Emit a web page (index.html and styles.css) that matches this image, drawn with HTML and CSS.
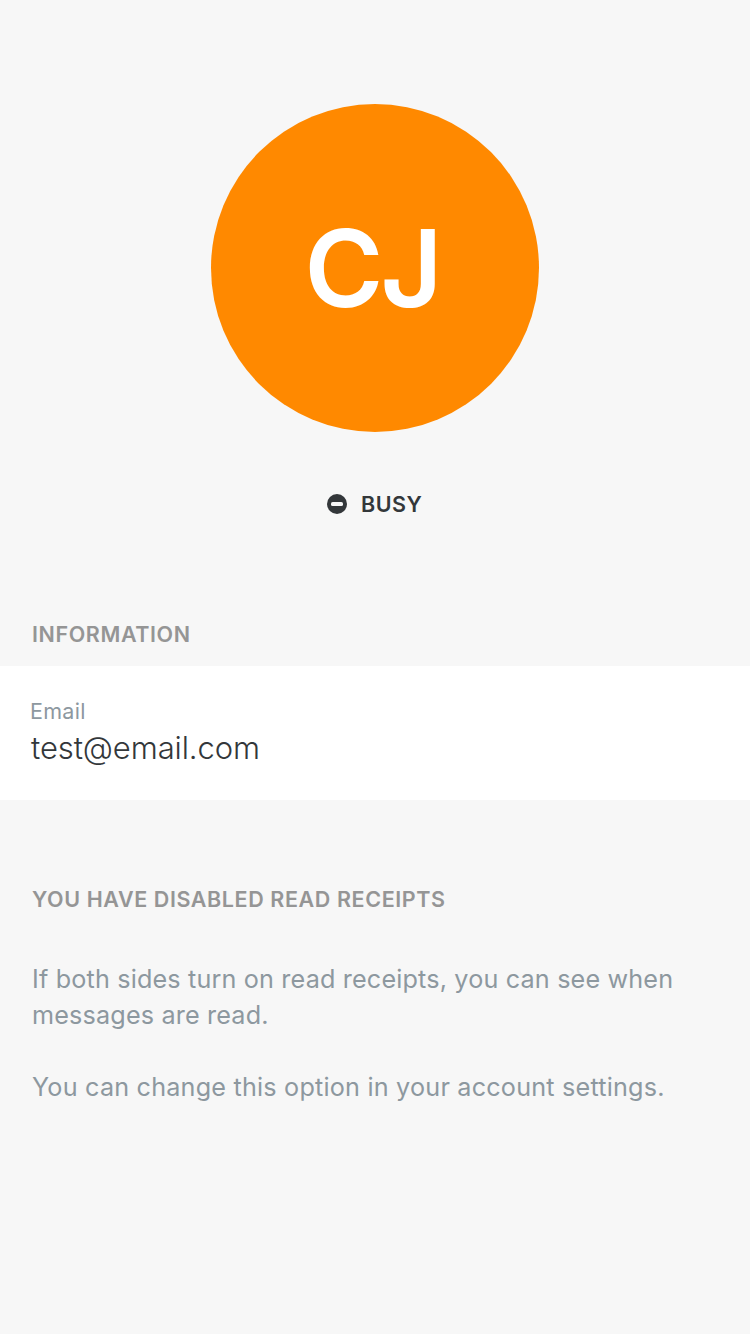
FILE: index.html
```html
<!DOCTYPE html>
<html lang="en">
<head>
<meta charset="utf-8">
<title>Profile</title>
<link rel="stylesheet" href="styles.css">
</head>
<body>
<main class="profile">
  <div class="avatar"><span class="initials">CJ</span></div>
  <div class="status">
    <svg class="status-icon" viewBox="0 0 20 20"><circle cx="10" cy="10" r="10"/><rect x="4" y="8" width="12" height="4" rx="1.6"/></svg>
    <span class="status-label">BUSY</span>
  </div>
  <h2 class="heading info-heading">INFORMATION</h2>
  <section class="card">
    <div class="label">Email</div>
    <div class="value">test@email.com</div>
  </section>
  <h2 class="heading receipts-heading">YOU HAVE DISABLED READ RECEIPTS</h2>
  <div class="note">
    <p class="see">If both sides turn on read receipts, you can see when<br><span class="second">messages are read.</span></p>
    <p class="change">You can change this option in your account settings.</p>
  </div>
</main>
</body>
</html>
```
FILE: styles.css
```css
* { box-sizing: border-box; }
body { margin: 0; background: #f7f7f7; font-family: Inter, Roboto, sans-serif; color: #33373a; }
.profile { min-height: 1334px; padding-top: 104px; display: flex; flex-direction: column; }
.avatar { width: 328px; height: 328px; padding-right: 6px; border-radius: 50%; background: #ff8900; align-self: center; display: flex; align-items: center; justify-content: center; }
.initials { color: #fff; font-size: 107px; font-weight: 580; line-height: 130px; letter-spacing: -3px; }
.status { display: flex; align-items: center; height: 28px; margin: 58px 0 0 327px; gap: 14px; }
.status-icon { width: 20px; height: 20px; fill: #33373a; }
.status-icon rect { fill: #f7f7f7; }
.status-label { font-size: 21.5px; font-weight: 580; line-height: 28px; letter-spacing: 0.5px; }
.heading { margin: 0; padding-left: 32px; font-size: 21.5px; font-weight: 580; line-height: 28px; letter-spacing: 0.6px; color: #959595; white-space: nowrap; }
.info-heading { margin-top: 102px; }
.card { margin-top: 18px; height: 134px; padding: 31px 30px 0; background: #fff; }
.label { font-size: 21.5px; line-height: 28px; letter-spacing: 0.3px; color: #8d989f; }
.value { font-size: 31px; font-weight: 300; line-height: 40px; margin: 3px 0 0 1px; letter-spacing: -0.1px; }
.receipts-heading { margin-top: 85px; }
.note { margin-top: 48px; padding-left: 32px; font-size: 25.2px; line-height: 36px; letter-spacing: 0.16px; color: #8d989f; white-space: nowrap; }
.note p { margin: 0 0 36px; }
.note .change { letter-spacing: 0.2px; }
```
